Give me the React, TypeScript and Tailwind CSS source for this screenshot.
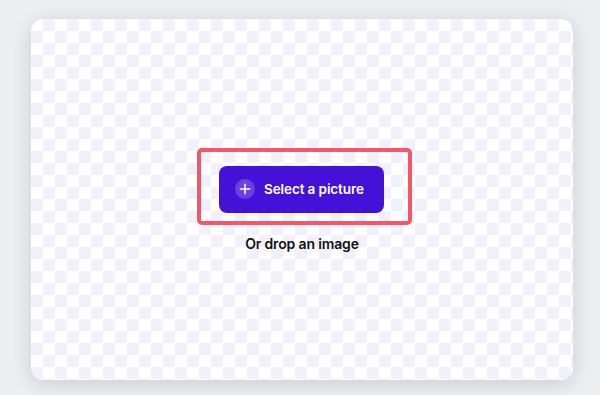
import { Plus } from "lucide-react";

export default function App() {
  return (
    <div className="w-[600px] h-[395px] bg-[#eceef1] pt-[19px] pl-[31px] font-['Inter',sans-serif]">
      <div className="w-[542px] h-[361px] rounded-[12px] bg-white shadow-[0_4px_20px_rgba(0,0,0,0.14)] bg-[conic-gradient(#f2f0fb_25%,transparent_0_50%,#f2f0fb_0_75%,transparent_0)] bg-[length:24px_24px] flex flex-col items-center justify-center">
        <div className="ml-[5px] border-[4px] border-[#f4566a] rounded-[5px] pl-[18px] pr-[24px] pt-[14px] pb-[8px]">
          <button className="w-[165px] h-[47px] rounded-[8px] bg-[#4511d9] flex items-center pl-[16px] gap-[9px] text-white">
            <span className="w-[20px] h-[20px] rounded-full bg-white/20 flex items-center justify-center">
              <Plus size={16} strokeWidth={2.25} />
            </span>
            <span className="text-[13.5px] font-semibold tracking-[-0.1px]">Select a picture</span>
          </button>
        </div>
        <p className="mt-[10px] text-[14px] leading-[17px] font-semibold text-[#111] tracking-[-0.15px]">Or drop an image</p>
      </div>
    </div>
  );
}
